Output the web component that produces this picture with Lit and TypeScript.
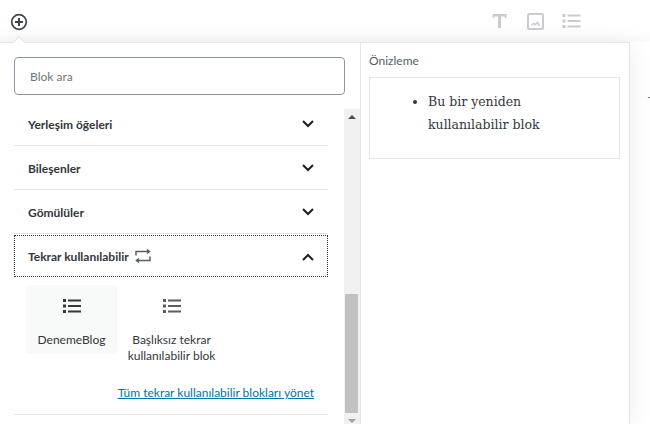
import { LitElement, html, css, svg } from "lit";
import { customElement } from "lit/decorators.js";

const chevDown = svg`<path d="M3 5 8 10 13 5" fill="none" stroke="#1e1e1e" stroke-width="2"/>`;
const chevUp = svg`<path d="M3 11 8 6 13 11" fill="none" stroke="#1e1e1e" stroke-width="2"/>`;
const listIcon = svg`<path d="M0 3h3v3H0zM0 8.500h3v3H0zM0 14h3v3H0zM5 3.500h13v2H5zM5 9h13v2H5zM5 14.500h13v2H5z"/>`;

@customElement("app-root")
export class AppRoot extends LitElement {
  static styles = css`
    :host { display: block; width: 650px; height: 424px; overflow: hidden; position: relative; background: #fff; font-family: "Lato", "Open Sans", sans-serif; color: #1e1e1e; }
    .toolbar { height: 42px; display: flex; align-items: center; padding: 0 65px 0 10px; justify-content: space-between; box-sizing: border-box; background: linear-gradient(#fff 70%, #fafafa); }
    .plus { width: 18px; height: 18px; display: block; margin-top: 1px; }
    .tools { display: flex; gap: 9px; color: #c8cbd0; }
    .tools svg { display: block; width: 27px; height: 24px; }
    .pop { display: flex; width: 630px; height: 382px; border-top: 1px solid #e2e4e7; border-right: 1px solid #e2e4e7; box-sizing: border-box; box-shadow: 0 3px 24px rgba(0,0,0,.08); background: #fff; position: relative; }
    .caret { position: absolute; left: 14px; top: 38px; width: 9px; height: 9px; background: #fff; border-top: 1px solid #e2e4e7; border-left: 1px solid #e2e4e7; transform: rotate(45deg); }
    .left { width: 361px; flex: none; display: flex; flex-direction: column; border-right: 1px solid #e2e4e7; box-sizing: border-box; padding-top: 14px; }
    .search { margin: 0 15px 14px 14px; height: 38px; box-sizing: border-box; border: 1px solid #8d96a0; border-radius: 4px; padding: 0 15px; display: flex; align-items: center; font-size: 12px; color: #72777c; }
    .scroll { flex: 1; display: flex; min-height: 0; overflow: hidden; }
    .list { width: 314px; margin: -7px 0 0 14px; flex: none; }
    .row { height: 44px; box-sizing: border-box; border-bottom: 1px solid #e2e4e7; display: flex; align-items: center; justify-content: space-between; padding: 1px 12px 0 14px; font-size: 12px; font-weight: 700; color: #32373c; }
    .row svg { width: 16px; height: 16px; display: block; }
    .open { height: 42px; margin-top: 1px; border: 1px dotted #333; padding-left: 13px; padding-right: 11px; }
    .title { display: flex; align-items: center; gap: 6px; }
    .title svg { width: 16px; height: 16px; margin-top: -2px; }
    .items { display: flex; gap: 9px; padding: 8px 12px 0; }
    .item { width: 91px; height: 69px; box-sizing: border-box; padding-top: 11px; font-size: 12px; line-height: 16px; text-align: center; color: #32373c; border-radius: 4px; }
    .item.on { background: #f8f9f9; }
    .item svg { display: block; width: 18px; height: 20px; margin: 0 auto 16px; fill: #32373c; }
    .item.off svg { fill: #555d66; }
    .item span { display: block; margin: 0 -6px; }
    .link { display: block; text-align: right; padding-right: 14px; margin-top: 31px; font-size: 12px; line-height: 16px; color: #0073aa; text-decoration: underline; }
    .end { height: 13px; border-bottom: 1px solid #e2e4e7; }
    .bar { width: 16px; margin-left: 16px; background: #f1f1f1; position: relative; flex: none; }
    .thumb { position: absolute; left: 1px; right: 2px; top: 185px; height: 119px; background: #c1c1c1; }
    .up, .down { position: absolute; left: 4px; width: 0; height: 0; border-left: 4px solid transparent; border-right: 4px solid transparent; }
    .up { top: 6px; border-bottom: 4px solid #505050; }
    .down { bottom: 1px; border-top: 4px solid #a3a3a3; }
    .right { flex: 1; padding: 10px 9px 0 8px; }
    .label { font-size: 12px; line-height: 16px; color: #555d66; margin-bottom: 8px; }
    .preview { height: 82px; border: 1px solid #e2e4e7; box-sizing: border-box; font-family: "DejaVu Serif", serif; font-size: 12.500px; line-height: 23px; color: #32373c; padding: 12px 60px 0 0; }
    ul { margin: 0; padding-left: 58px; }
    .dot { position: absolute; left: 648px; top: 97px; width: 2px; height: 1px; background: #d0505a; }
  `;

  render() {
    return html`
      <div class="toolbar">
        <svg class="plus" viewBox="0 0 18 18"><circle cx="9" cy="9" r="7.300" fill="none" stroke="#40464d" stroke-width="1.700"/><path d="M5 9h8M9 5v8" stroke="#40464d" stroke-width="2"/></svg>
        <div class="tools">
          <svg viewBox="0 0 27 24" fill="currentColor"><path d="M6.500 5h14v4h-1.300l-.7-1.500H15V19h-3V7.500H8.500L7.800 9H6.500z"/></svg>
          <svg viewBox="0 0 27 24" fill="none" stroke="currentColor" stroke-width="2"><rect x="6" y="5" width="15" height="15" rx="1"/><path d="M9.500 16.500l2-2 2 1 2-2 2 3" stroke-width="1.500"/></svg>
          <svg viewBox="-4.500 -2 27 24" fill="currentColor">${listIcon}</svg>
        </div>
      </div>
      <div class="pop">
        <div class="left">
          <div class="search">Blok ara</div>
          <div class="scroll">
            <div class="list">
              <div class="row">Yerleşim öğeleri<svg viewBox="0 0 16 16">${chevDown}</svg></div>
              <div class="row">Bileşenler<svg viewBox="0 0 16 16">${chevDown}</svg></div>
              <div class="row">Gömülüler<svg viewBox="0 0 16 16">${chevDown}</svg></div>
              <div class="row open">
                <span class="title">Tekrar kullanılabilir
                  <svg viewBox="0 0 16 16" fill="none" stroke="#555d66" stroke-width="1.500"><path d="M1 7.500V3.500h13M12 1.500l2.500 2-2.500 2M15 8.500v4H1.500M4 10.500l-2.500 2 2.500 2"/></svg>
                </span>
                <svg viewBox="0 0 16 16">${chevUp}</svg>
              </div>
              <div class="items">
                <div class="item on"><svg viewBox="0 0 18 20">${listIcon}</svg>DenemeBlog</div>
                <div class="item off"><svg viewBox="0 0 18 20">${listIcon}</svg><span>Başlıksız tekrar kullanılabilir blok</span></div>
              </div>
              <a class="link">Tüm tekrar kullanılabilir blokları yönet</a>
              <div class="end"></div>
            </div>
            <div class="bar"><div class="up"></div><div class="thumb"></div><div class="down"></div></div>
          </div>
        </div>
        <div class="right">
          <div class="label">Önizleme</div>
          <div class="preview"><ul><li>Bu bir yeniden kullanılabilir blok</li></ul></div>
        </div>
      </div>
      <div class="caret"></div>
      <div class="dot"></div>
    `;
  }
}
